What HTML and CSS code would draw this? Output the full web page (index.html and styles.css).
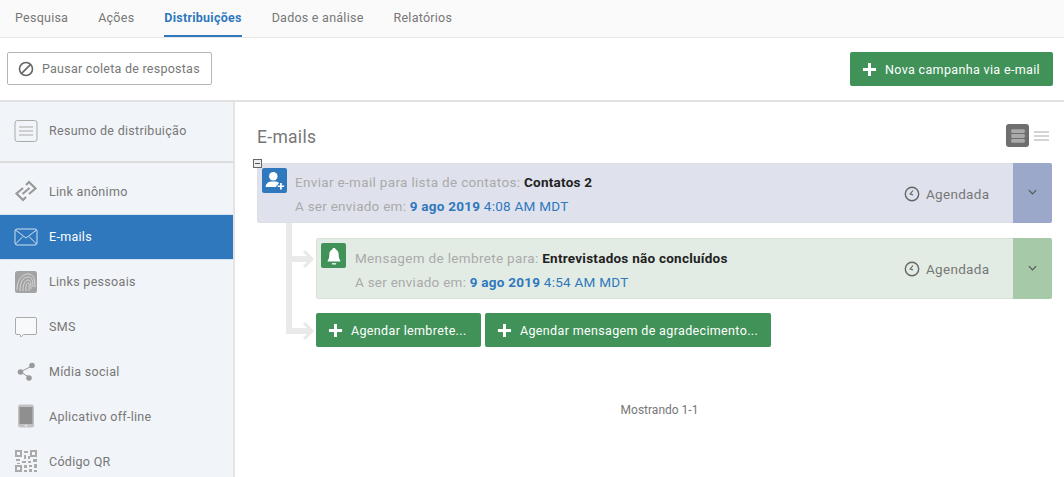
FILE: index.html
```html
<!DOCTYPE html>
<html lang="pt-BR">
<head>
<meta charset="utf-8">
<title>Distribuições</title>
<link rel="stylesheet" href="styles.css">
</head>
<body>
<nav class="tabs">
  <a class="tab">Pesquisa</a>
  <a class="tab">Ações</a>
  <a class="tab active">Distribuições</a>
  <a class="tab">Dados e análise</a>
  <a class="tab">Relatórios</a>
</nav>
<div class="toolbar">
  <button class="btn-outline">
    <svg class="ico-ban" viewBox="0 0 16 16"><circle cx="8" cy="8" r="6.500" fill="none" stroke="#666" stroke-width="1.600"/><path d="M3.600 12.400 12.400 3.600" stroke="#666" stroke-width="1.600"/></svg>
    Pausar coleta de respostas
  </button>
  <button class="btn-green btn-new">
    <svg class="plus" viewBox="0 0 16 16"><path d="M8 1v14M1 8h14" stroke="#fff" stroke-width="3.200"/></svg>
    Nova campanha via e-mail
  </button>
</div>
<div class="layout">
  <aside class="side">
    <div class="side-top">
      <a class="side-item">
        <svg class="side-ico" viewBox="0 0 24 24"><rect x="1" y="1.500" width="22" height="21" rx="2.500" fill="#f1f4f8" stroke="#aaa" stroke-width="1"/><path d="M5 8h14M5 12h14M5 16h14" stroke="#aaa" stroke-width="1"/></svg>
        Resumo de distribuição
      </a>
    </div>
    <div class="side-list">
      <a class="side-item">
        <svg class="side-ico" viewBox="0 0 24 24"><g fill="none" stroke="#999" stroke-width="2.200"><path d="M9 9 2.500 14.500 9 21l3-3"/><path d="M15 15 21.500 9.500 15 3l-3 3"/><path d="M8.500 15 15.500 9"/></g></svg>
        Link anônimo
      </a>
      <a class="side-item current">
        <svg class="side-ico" viewBox="0 0 24 24"><rect x="1" y="4" width="22" height="16" rx="2" fill="none" stroke="#cfe0f2" stroke-width="1"/><path d="M1.500 5 12 13 22.500 5M1.500 19 9 11.500M22.500 19 15 11.500" fill="none" stroke="#cfe0f2" stroke-width="1"/></svg>
        E-mails
      </a>
      <a class="side-item">
        <svg class="side-ico" viewBox="0 0 24 24"><rect x="1" y="1" width="22" height="22" rx="2.500" fill="#a3a3a3"/><g fill="none" stroke="#e2e2e2" stroke-width="0.800"><path d="M3 20C3 10 8 4 14 4s7 6 7 13"/><path d="M6 21c0-9 3-14 8-14 4 0 5 4 5 10"/><path d="M9 21c0-7 2-11 5-11 3 0 3 4 3 9"/><path d="M12 21c0-5 0-8 2-8s1 4 1 8"/></g></svg>
        Links pessoais
      </a>
      <a class="side-item">
        <svg class="side-ico" viewBox="0 0 24 24"><path d="M3 2.500h18a1.500 1.500 0 0 1 1.500 1.500v14a1.500 1.500 0 0 1-1.500 1.500H9.500L7 22l-1-2.500H3A1.500 1.500 0 0 1 1.500 18V4A1.500 1.500 0 0 1 3 2.500z" fill="#f7f9fb" stroke="#aaa" stroke-width="1"/></svg>
        SMS
      </a>
      <a class="side-item">
        <svg class="side-ico" viewBox="0 0 24 24"><path d="M6 12 18 6M6 12l11 6" stroke="#999" stroke-width="1"/><circle cx="6.500" cy="12" r="2.800" fill="#9a9a9a"/><circle cx="18" cy="5.500" r="2.800" fill="#9a9a9a"/><circle cx="15" cy="18" r="2.800" fill="#9a9a9a"/></svg>
        Mídia social
      </a>
      <a class="side-item">
        <svg class="side-ico" viewBox="0 0 24 24"><rect x="4" y="0.500" width="16" height="23" rx="2.500" fill="#c2c2c2"/><rect x="5.500" y="3" width="13" height="17" fill="#8f8f8f"/><circle cx="12" cy="21.700" r="0.900" fill="#f1f4f8"/></svg>
        Aplicativo off-line
      </a>
      <a class="side-item">
        <svg class="side-ico" viewBox="0 0 24 24"><g fill="#aaa"><path d="M1 1h7v7H1zM16 1h7v7h-7zM1 16h7v7H1z"/><path d="M10 2h4v2h-4zM10 6h2v4h-2zM14 7h2v3h-2zM2 10h4v2H2zM8 12h4v2H8zM14 12h3v2h-3zM19 10h4v3h-4zM3 14h3v1H3zM10 16h3v3h-3zM15 16h3v2h-3zM20 15h3v4h-3zM15 20h3v3h-3zM10 21h3v2h-3zM20 21h3v2h-3z"/></g><g fill="#f1f4f8"><rect x="3" y="3" width="3" height="3"/><rect x="18" y="3" width="3" height="3"/><rect x="3" y="18" width="3" height="3"/></g></svg>
        Código QR
      </a>
    </div>
  </aside>
  <main class="main">
    <div class="head">
      <h1 class="title">E-mails</h1>
      <div class="views">
        <span class="view-on">
          <svg viewBox="0 0 14 14" class="view-ico"><rect x="1" y="1" width="12" height="3.400" rx="1.200" fill="#aaa"/><rect x="1" y="5.300" width="12" height="3.400" rx="1.200" fill="#aaa"/><rect x="1" y="9.600" width="12" height="3.400" rx="1.200" fill="#aaa"/></svg>
        </span>
        <svg viewBox="0 0 15 10" class="view-list"><path d="M0 1h15M0 5h15M0 9h15" stroke="#aaa" stroke-width="1"/></svg>
      </div>
    </div>
    <div class="tree">
      <span class="collapse"></span>
      <article class="card card-blue">
        <span class="badge badge-blue">
          <svg viewBox="0 0 26 26" class="badge-ico"><circle cx="11" cy="7.500" r="5" fill="#fff"/><path d="M2 20c0-4 3-6 6-6.500h6c2 .4 3 1 3.800 2L14 20z" fill="#fff"/><path d="M20 15.500v7.500M16.200 19.200h7.600" stroke="#fff" stroke-width="2"/></svg>
        </span>
        <div class="card-body">
          <p class="line line-top">Enviar e-mail para lista de contatos: <b class="name">Contatos 2</b></p>
          <p class="line">A ser enviado em: <span class="date"><b>9 ago 2019</b> 4:08 AM MDT</span></p>
        </div>
        <div class="status">
          <svg viewBox="0 0 16 16" class="clock"><circle cx="8" cy="8" r="6.700" fill="none" stroke="#666" stroke-width="1.400"/><path d="M9 4.500 6.200 8 9 8.800" fill="none" stroke="#666" stroke-width="1.200"/></svg>
          Agendada
        </div>
        <div class="toggle toggle-blue">
          <svg viewBox="0 0 10 6" class="chev"><path d="M1 1l4 4 4-4" fill="none" stroke="#555" stroke-width="1.300"/></svg>
        </div>
      </article>
      <div class="children">
        <svg class="connector" viewBox="0 0 30 120"><path d="M3 0v108h22M3 36h22" fill="none" stroke="#e9e9e9" stroke-width="6"/><path d="M18 28l8 8-8 8M18 100l8 8-8 8" fill="none" stroke="#e9e9e9" stroke-width="3"/></svg>
        <article class="card card-green">
          <span class="badge badge-green">
            <svg viewBox="0 0 26 26" class="badge-ico"><path d="M13 3.500c-1.200 0-2 .8-2 1.700-2.500 1-3.500 3-3.500 5.800 0 3.500-.5 5.500-2 7.500v1h15v-1c-1.500-2-2-4-2-7.500 0-2.800-1-4.800-3.500-5.800 0-.9-.8-1.700-2-1.700z" fill="#fff"/><path d="M10.500 21.500h5v1.500h-5z" fill="#fff"/></svg>
          </span>
          <div class="card-body">
            <p class="line line-top">Mensagem de lembrete para: <b class="name">Entrevistados não concluídos</b></p>
            <p class="line">A ser enviado em: <span class="date"><b>9 ago 2019</b> 4:54 AM MDT</span></p>
          </div>
          <div class="status">
            <svg viewBox="0 0 16 16" class="clock"><circle cx="8" cy="8" r="6.700" fill="none" stroke="#666" stroke-width="1.400"/><path d="M9 4.500 6.200 8 9 8.800" fill="none" stroke="#666" stroke-width="1.200"/></svg>
            Agendada
          </div>
          <div class="toggle toggle-green">
            <svg viewBox="0 0 10 6" class="chev"><path d="M1 1l4 4 4-4" fill="none" stroke="#555" stroke-width="1.300"/></svg>
          </div>
        </article>
        <div class="actions">
          <button class="btn-green btn-small">
            <svg class="plus" viewBox="0 0 16 16"><path d="M8 1v14M1 8h14" stroke="#fff" stroke-width="3.200"/></svg>
            Agendar lembrete...
          </button>
          <button class="btn-green btn-small">
            <svg class="plus" viewBox="0 0 16 16"><path d="M8 1v14M1 8h14" stroke="#fff" stroke-width="3.200"/></svg>
            Agendar mensagem de agradecimento...
          </button>
        </div>
      </div>
    </div>
    <p class="showing">Mostrando 1-1</p>
  </main>
</div>
</body>
</html>
```
FILE: styles.css
```css
* { box-sizing: border-box; }
html, body { margin: 0; height: 100%; overflow: hidden; }
body { font-family: Roboto, "Liberation Sans", sans-serif; color: #777; background: #fff; width: 1064px; height: 477px; }

.tabs { display: flex; gap: 30px; height: 38px; padding-left: 15px; background: #fafafa; border-bottom: 1px solid #e8e8e8; }
.tab { font-size: 12.500px; letter-spacing: .25px; color: #777; line-height: 36px; height: 37px; }
.tab.active { color: #2f78bd; font-weight: 700; border-bottom: 2px solid #2f78bd; }

.toolbar { display: flex; justify-content: space-between; align-items: flex-start; height: 64px; padding: 14px 11px 0 7px; border-bottom: 2px solid #e2e2e2; }
.btn-outline { display: flex; align-items: center; gap: 8px; width: 205px; height: 33px; padding: 0 10px; white-space: nowrap; background: #fff; border: 1px solid #b5b5b5; border-radius: 2px; font: 12.500px Roboto, sans-serif; letter-spacing: .25px; color: #777; }
.ico-ban { width: 16px; height: 16px; flex: none; }
.btn-green { display: flex; align-items: center; background: #419259; color: #fff; border: 0; border-radius: 2px; font-family: Roboto, sans-serif; font-size: 12.500px; letter-spacing: .35px; padding: 0; }
.btn-new { width: 203px; height: 34px; padding-left: 12px; gap: 8px; }
.plus { width: 15px; height: 15px; flex: none; }

.layout { display: flex; height: 375px; }
.side { width: 235px; flex: none; background: #f1f4f8; border-right: 2px solid #e4e4e4; overflow: hidden; }
.side-top { height: 61px; border-bottom: 2px solid #dcdcdc; display: flex; align-items: center; padding-bottom: 1px; }
.side-top .side-item { width: 100%; }
.side-list { padding-top: 6px; }
.side-item { display: flex; align-items: center; gap: 11px; height: 44.800px; padding-left: 14px; font-size: 12.500px; letter-spacing: .3px; color: #777; }
.side-ico { width: 24px; height: 24px; flex: none; }
.side-item.current { height: 45.800px; background: #2f78bd; color: #fff; border-top: 1px solid #d6e4f2; border-bottom: 1px solid #d6e4f2; margin-right: -2px; }

.main { flex: 1; padding: 21px 12px 0 22px; min-width: 0; }
.head { display: flex; justify-content: space-between; align-items: center; height: 25px; }
.title { margin: 2px 0 0; font-size: 17.500px; font-weight: 400; letter-spacing: .3px; color: #777; }
.views { display: flex; align-items: center; gap: 5px; margin-right: 3px; }
.view-on { display: flex; align-items: center; justify-content: center; width: 23px; height: 23px; background: #6f6f6f; border-radius: 3px; }
.view-ico { width: 16px; height: 16px; }
.view-list { width: 15px; height: 10px; }

.tree { position: relative; margin-top: 15px; }
.collapse { position: absolute; left: -4px; top: -4px; z-index: 1; width: 9px; height: 9px; background: #eee linear-gradient(#555, #555) center / 5px 1px no-repeat; border: 1px solid #666; }
.card { display: flex; align-items: stretch; border-radius: 2px; }
.card-blue { height: 60px; background: #dfe2ed; border: 1px solid #dcdfe6; }
.card-green { height: 61px; background: #e2ece4; border: 1px solid #d8e4da; }
.badge { flex: none; display: flex; align-items: center; justify-content: center; width: 25px; height: 25px; margin: 4px 8px 0 4px; border-radius: 2px; }
.badge-blue { background: #2f78bd; }
.badge-green { background: #419259; margin-right: 9px; }
.badge-ico { width: 22px; height: 22px; }
.card-body { flex: 1; min-width: 0; padding-top: 7px; }
.card-blue .card-body { padding-top: 6px; }
.line { margin: 0; font-size: 13.500px; line-height: 24px; color: #aaa; letter-spacing: .25px; white-space: nowrap; }
.line-top { letter-spacing: .33px; }
.name { color: #222; font-size: 13.500px; letter-spacing: .25px; }
.date { color: #2f78bd; }
.status { display: flex; align-items: center; gap: 6px; width: 110px; font-size: 13.500px; letter-spacing: .3px; color: #777; flex: none; }
.card-blue .status { padding-top: 2px; }
.clock { width: 16px; height: 16px; }
.toggle { flex: none; width: 39px; display: flex; align-items: center; justify-content: center; margin: -1px; padding-bottom: 2px; border-radius: 0 2px 2px 0; }
.toggle-blue { background: #9ba8c9; }
.toggle-green { background: #a6caa8; }
.chev { width: 9px; height: 6px; }

.children { position: relative; padding: 15px 0 0 59px; }
.connector { position: absolute; left: 29px; top: 0; width: 30px; height: 120px; }
.actions { display: flex; gap: 4px; margin-top: 14px; }
.btn-small { height: 34px; padding: 0 13px 0 12px; gap: 8px; border-radius: 2px; white-space: nowrap; }
.btn-small:first-child { width: 165px; }
.btn-small:last-child { width: 286px; }

.showing { margin: 56px 0 0 0; padding-left: 10px; text-align: center; font-size: 12px; color: #777; }
```
